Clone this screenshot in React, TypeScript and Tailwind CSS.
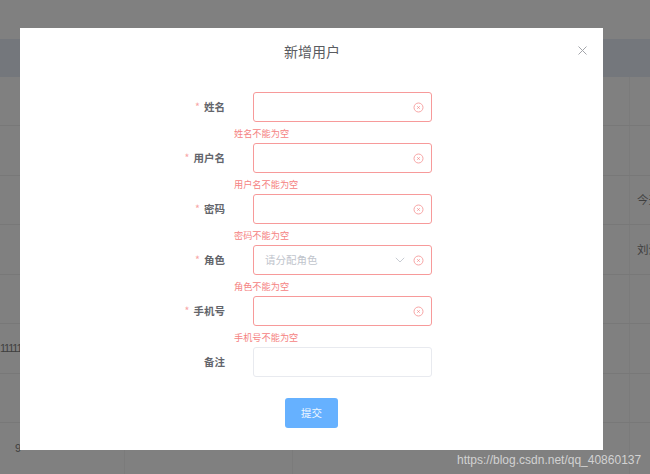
import React from 'react';

const fields = [
  { label: '姓名', error: '姓名不能为空' },
  { label: '用户名', error: '用户名不能为空' },
  { label: '密码', error: '密码不能为空' },
  { label: '角色', error: '角色不能为空', placeholder: '请分配角色' },
  { label: '手机号', error: '手机号不能为空' },
];

// row heights of the table behind the mask
const rows = [
  { h: 'h-[49px]' },
  { h: 'h-[50px]' },
  { h: 'h-[49px]', right: '今天' },
  { h: 'h-[50px]', right: '刘涛' },
  { h: 'h-[49px]' },
  { h: 'h-[50px]', left: '1111111', leftPad: 'pl-0' },
  { h: 'h-[49px]' },
  { h: 'h-[52px]', left: '9', leftPad: 'pl-[15px]' },
];

const ErrorIcon = () => (
  <svg width="11" height="11" viewBox="0 0 11 11" fill="none" stroke="#f8a5a5" strokeWidth="1" className="shrink-0">
    <circle cx="5.5" cy="5.5" r="4.5" />
    <path d="M4.4 4.4l2.2 2.2M6.6 4.4l-2.2 2.2" stroke="#f58f8f" />
  </svg>
);

const Chevron = () => (
  <svg width="10" height="6" viewBox="0 0 10 6" fill="none" stroke="#c8ccd3" strokeWidth="1" className="shrink-0">
    <path d="M0.8 0.8L5 5l4.2-4.2" />
  </svg>
);

export default function App() {
  return (
    <div className="relative w-[650px] h-[474px] overflow-hidden bg-[#808080] font-['Noto_Sans_CJK_SC','Noto_Sans',sans-serif]">
      {/* Table behind the mask */}
      <div className="pt-[39px] w-[650px]">
        <div className="h-[38px] bg-[#74777c]" />
        {rows.map((row, i) => (
          <div key={i} className={`${row.h} flex border-b border-[#787878] text-[11.5px] text-[#3f3f3f]`}>
            <div
              className={`w-[125px] shrink-0 border-r border-[#7b7b7b] ${row.leftPad ?? ''} flex items-center overflow-hidden font-['Liberation_Sans',sans-serif] text-[11px] tracking-[-1.2px]`}
            >
              {row.left}
            </div>
            <div className="w-[168px] shrink-0 border-r border-[#7b7b7b]" />
            <div className="w-[337px] shrink-0 border-r border-[#7b7b7b]" />
            <div className="w-[20px] shrink-0 pl-[7px] flex items-center whitespace-nowrap overflow-hidden">{row.right}</div>
          </div>
        ))}
      </div>

      {/* Dialog */}
      <div className="absolute left-[20px] top-[28px] w-[583px] h-[422px] bg-white flex flex-col">
        <div className="relative h-[64px] pt-[12px] pl-[1px] text-center text-[14px] leading-[22px] text-[#5a5c61]">
          新增用户
          <svg
            width="9"
            height="9"
            viewBox="0 0 9 9"
            fill="none"
            stroke="#a3a5aa"
            strokeWidth="1"
            className="absolute left-[558px] top-[18px]"
          >
            <path d="M0.5 0.5l8 8M8.5 0.5l-8 8" />
          </svg>
        </div>

        {fields.map((f) => (
          <div key={f.label}>
            <div className="flex items-center">
              <div className="w-[205px] text-right text-[10.5px] font-bold text-[#63656b]">
                <span className="text-[#f8a5a5] mr-[4px] font-normal">*</span>
                {f.label}
              </div>
              <div className="ml-[28px] w-[179px] h-[30px] rounded-[3px] border border-[#f79a9a] bg-white flex items-center pl-[11px] pr-[7px]">
                <span className="flex-1 text-[10.5px] text-[#c0c4cc]">{f.placeholder}</span>
                {f.placeholder && (
                  <span className="mr-[8px] flex">
                    <Chevron />
                  </span>
                )}
                <ErrorIcon />
              </div>
            </div>
            <div className="h-[21px] pl-[214px] pt-[5px] text-[9.2px] leading-[13px] text-[#f58383]">{f.error}</div>
          </div>
        ))}

        <div className="flex items-center">
          <div className="w-[205px] text-right text-[10.5px] font-bold text-[#63656b]">备注</div>
          <div className="ml-[28px] w-[179px] h-[30px] rounded-[3px] border border-[#e8eaef] bg-white" />
        </div>

        <button className="mt-[21px] ml-[265px] w-[53px] h-[30px] rounded-[3px] bg-[#66b1ff] text-[#eef6ff] text-[10.5px]">
          提交
        </button>
      </div>

      {/* Watermark */}
      <div className="absolute left-[457px] top-[452px] font-['Liberation_Sans',sans-serif] text-[12px] leading-[16px] text-[#d2d2d2] whitespace-nowrap">
        https://blog.csdn.net/qq_40860137
      </div>
    </div>
  );
}
